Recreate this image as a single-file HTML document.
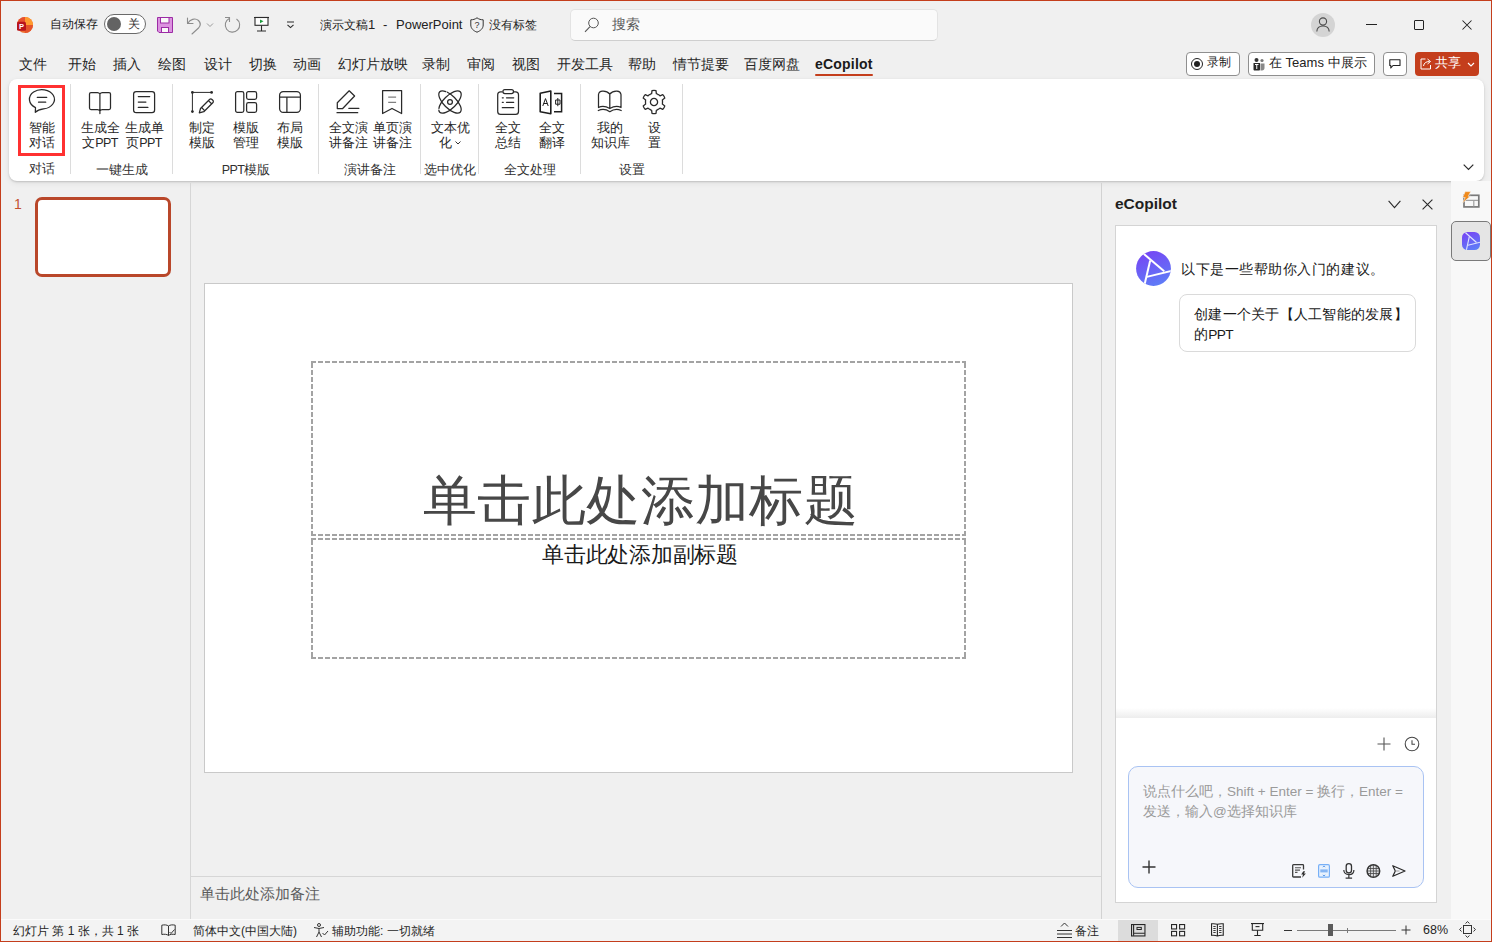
<!DOCTYPE html>
<html><head><meta charset="utf-8">
<style>
*{box-sizing:border-box;margin:0;padding:0}
html,body{width:1492px;height:942px;overflow:hidden;background:#f0f0f0}
body{position:relative;font-family:"Liberation Sans",sans-serif;color:#242424}
.a{position:absolute}
.t{position:absolute;white-space:nowrap;line-height:1}
svg{position:absolute;overflow:visible}
.ic{fill:none;stroke:#303030;stroke-width:1.1;stroke-linecap:round;stroke-linejoin:round}
.rl{position:absolute;font-size:12.5px;line-height:15px;text-align:center;width:60px;color:#262626}
.gl{position:absolute;font-size:12.5px;line-height:12px;text-align:center;width:100px;color:#303030}
.sep{position:absolute;top:84px;width:1px;height:90px;background:#dcdcdc}
</style></head><body>
<!-- window border -->
<div class="a" style="left:0;top:0;width:1492px;height:942px;border:1px solid #c43e1c;z-index:50;pointer-events:none"></div>

<!-- ===== TITLE BAR ===== -->
<div id="titlebar">
<svg style="left:16px;top:16px" width="18" height="18" viewBox="0 0 18 18">
 <circle cx="9" cy="9" r="8" fill="#ed6c2f"/>
 <path d="M9 1 A8 8 0 0 1 17 9 L9 9 Z" fill="#ff9a2e"/>
 <path d="M17 9 A8 8 0 0 1 9 17 L9 9 Z" fill="#e5532a"/>
 <path d="M1 9 A8 8 0 0 1 9 1 L9 9 Z" fill="#e6502f"/>
 <rect x="1" y="5.8" width="9" height="9" rx="1.6" fill="#b8141c"/>
 <text x="5.5" y="13.3" font-size="7.5" font-weight="bold" fill="#fff" text-anchor="middle" font-family="Liberation Sans">P</text>
</svg>
<div class="t" style="left:50px;top:18px;font-size:12.2px;color:#222">自动保存</div>
<div class="a" style="left:104px;top:14px;width:42px;height:20px;border:1px solid #6a6a6a;border-radius:10px;background:#fff"></div>
<div class="a" style="left:107px;top:17px;width:14px;height:14px;border-radius:7px;background:#636363"></div>
<div class="t" style="left:128px;top:18px;font-size:12px;color:#333">关</div>
<svg style="left:157px;top:17px" width="16" height="16" viewBox="0 0 16 16">
 <path d="M0.5 0.5 H15.5 V15.5 H2 L0.5 14 Z" fill="#dc92e0" stroke="#9c2ca5" stroke-width="1"/>
 <rect x="3.5" y="0.5" width="8.5" height="5.5" fill="#f9f9f9" stroke="#9c2ca5" stroke-width="1"/>
 <rect x="4.5" y="10.5" width="7" height="5" fill="#f9f9f9" stroke="#9c2ca5" stroke-width="1"/>
</svg>
<svg style="left:186px;top:16px" width="18" height="18" viewBox="0 0 18 18" class="ic" stroke="#8c8c8c">
 <path d="M1.5 2 V7.5 H7" style="stroke:#8c8c8c"/>
 <path d="M1.8 7.3 C4 3.5 9 1.5 12.5 4.5 C15 7 14.5 10 12.5 12 L6 18" style="stroke:#8c8c8c"/>
</svg>
<svg style="left:206px;top:22px" width="8" height="6" viewBox="0 0 8 6"><path d="M1 1.5 L4 4.5 L7 1.5" fill="none" stroke="#9a9a9a" stroke-width="1"/></svg>
<svg style="left:224px;top:16px" width="18" height="18" viewBox="0 0 18 18">
 <path d="M5.3 2.5 A7.2 7.2 0 1 0 12.5 3" fill="none" stroke="#8c8c8c" stroke-width="1.1"/>
 <path d="M1 1.5 H5.5 V6" fill="none" stroke="#8c8c8c" stroke-width="1.1"/>
</svg>
<svg style="left:254px;top:17px" width="16" height="16" viewBox="0 0 16 16">
 <path d="M0 0.5 H15" stroke="#2b2b2b" stroke-width="1.1"/>
 <rect x="1" y="0.5" width="13" height="7.8" fill="#fff" stroke="#2b2b2b" stroke-width="1.1"/>
 <path d="M6 2.5 L9.5 4.3 L6 6.2 Z" fill="#1f9d3f"/>
 <path d="M7.5 8.5 V14 M3 14 H12" stroke="#2b2b2b" stroke-width="1.1"/>
</svg>
<svg style="left:286px;top:21px" width="9" height="8" viewBox="0 0 9 8"><path d="M1 1 H8 M1.5 3.8 L4.5 6.6 L7.5 3.8" fill="none" stroke="#2b2b2b" stroke-width="1.1"/></svg>
<div class="t" style="left:320px;top:18px;font-size:12px;color:#222">演示文稿<span style="font-size:13px">1</span></div>
<div class="t" style="left:383px;top:18px;font-size:13px;color:#222">-</div>
<div class="t" style="left:396px;top:18px;font-size:13px;color:#222">PowerPoint</div>
<svg style="left:470px;top:17px" width="14" height="16" viewBox="0 0 14 16">
 <path d="M7 0.8 C5 2.3 3 2.8 0.8 2.8 V8 C0.8 11.5 3.5 13.8 7 15.2 C10.5 13.8 13.2 11.5 13.2 8 V2.8 C11 2.8 9 2.3 7 0.8 Z" fill="none" stroke="#333" stroke-width="1"/>
 <text x="7" y="11.3" font-size="9" fill="#333" text-anchor="middle" font-family="Liberation Sans">?</text>
</svg>
<div class="t" style="left:489px;top:19px;font-size:12px;color:#222">没有标签</div>
<div class="a" style="left:570px;top:9px;width:368px;height:32px;background:#fafafa;border:1px solid #e3e3e3;border-bottom-color:#cfcfcf;border-radius:5px"></div>
<svg style="left:584px;top:17px" width="16" height="16" viewBox="0 0 16 16">
 <circle cx="9.5" cy="6" r="4.8" fill="none" stroke="#555" stroke-width="1"/>
 <path d="M6 9.6 L1 14.8" stroke="#555" stroke-width="1.1"/>
</svg>
<div class="t" style="left:612px;top:18px;font-size:13.5px;color:#5c5c5c">搜索</div>
<div class="a" style="left:1311px;top:13px;width:24px;height:24px;border-radius:12px;background:#d4d4d4"></div>
<svg style="left:1315px;top:16px" width="16" height="17" viewBox="0 0 16 17">
 <circle cx="8" cy="5.5" r="3.6" fill="none" stroke="#4a4a4a" stroke-width="1.1"/>
 <path d="M1.8 15.5 C2 11.5 4.5 10 8 10 C11.5 10 14 11.5 14.2 15.5" fill="none" stroke="#4a4a4a" stroke-width="1.1"/>
</svg>
<div class="a" style="left:1366px;top:24px;width:11px;height:1px;background:#222"></div>
<div class="a" style="left:1414px;top:20px;width:10px;height:10px;border:1px solid #222;border-radius:1px"></div>
<svg style="left:1462px;top:20px" width="10" height="10" viewBox="0 0 10 10"><path d="M0.5 0.5 L9.5 9.5 M9.5 0.5 L0.5 9.5" stroke="#222" stroke-width="1.05"/></svg>
</div>

<!-- ===== TABS ===== -->
<div id="tabs">
<div class="t" style="left:19px;top:57.5px;font-size:13.5px;color:#262626">文件</div>
<div class="t" style="left:68px;top:57.5px;font-size:13.5px;color:#262626">开始</div>
<div class="t" style="left:113px;top:57.5px;font-size:13.5px;color:#262626">插入</div>
<div class="t" style="left:158px;top:57.5px;font-size:13.5px;color:#262626">绘图</div>
<div class="t" style="left:204px;top:57.5px;font-size:13.5px;color:#262626">设计</div>
<div class="t" style="left:249px;top:57.5px;font-size:13.5px;color:#262626">切换</div>
<div class="t" style="left:293px;top:57.5px;font-size:13.5px;color:#262626">动画</div>
<div class="t" style="left:338px;top:57.5px;font-size:13.5px;color:#262626">幻灯片放映</div>
<div class="t" style="left:422px;top:57.5px;font-size:13.5px;color:#262626">录制</div>
<div class="t" style="left:467px;top:57.5px;font-size:13.5px;color:#262626">审阅</div>
<div class="t" style="left:512px;top:57.5px;font-size:13.5px;color:#262626">视图</div>
<div class="t" style="left:557px;top:57.5px;font-size:13.5px;color:#262626">开发工具</div>
<div class="t" style="left:628px;top:57.5px;font-size:13.5px;color:#262626">帮助</div>
<div class="t" style="left:673px;top:57.5px;font-size:13.5px;color:#262626">情节提要</div>
<div class="t" style="left:744px;top:57.5px;font-size:13.5px;color:#262626">百度网盘</div>
<div class="t" style="left:815px;top:57px;font-size:14px;letter-spacing:0.2px;font-weight:bold;color:#1a1a1a">eCopilot</div>
<div class="a" style="left:815px;top:74px;width:58px;height:2px;background:#c43e1c;border-radius:1px"></div>
<div class="a" style="left:1186px;top:52px;width:54px;height:24px;border:1px solid #8f8f8f;border-radius:4px;background:#fff"></div>
<div class="a" style="left:1191px;top:58px;width:12px;height:12px;border:1.2px solid #222;border-radius:6px"></div>
<div class="a" style="left:1194px;top:61px;width:6px;height:6px;background:#222;border-radius:3px"></div>
<div class="t" style="left:1207px;top:56px;font-size:12px;color:#222">录制</div>
<div class="a" style="left:1248px;top:52px;width:127px;height:24px;border:1px solid #8f8f8f;border-radius:4px;background:#fff"></div>
<svg style="left:1253px;top:57px" width="12" height="14" viewBox="0 0 12 14">
 <circle cx="3.5" cy="3" r="2" fill="#333"/><circle cx="9" cy="3.5" r="1.6" fill="#777"/>
 <path d="M0.5 6 H7 V12.5 C7 13 6.5 13.5 6 13.5 H1.5 C1 13.5 0.5 13 0.5 12.5 Z" fill="#2a2a2a"/>
 <path d="M7.5 6.5 H11.5 V11 C11.5 12.5 10.5 13.5 9 13.5 H7.5 Z" fill="#888"/>
 <path d="M2 7.5 H5.5 M3.75 7.5 V12" stroke="#fff" stroke-width="1"/>
</svg>
<div class="t" style="left:1269px;top:56px;font-size:13px;color:#222">在 Teams 中展示</div>
<div class="a" style="left:1383px;top:52px;width:24px;height:24px;border:1px solid #8f8f8f;border-radius:4px;background:#fff"></div>
<svg style="left:1389px;top:59px" width="12" height="11" viewBox="0 0 12 11"><path d="M0.8 0.8 H11 V6.5 H4 L1.8 9 V6.5 H0.8 Z" fill="none" stroke="#222" stroke-width="1.1" stroke-linejoin="round"/></svg>
<div class="a" style="left:1415px;top:52px;width:64px;height:24px;border-radius:4px;background:#c43e1c"></div>
<svg style="left:1420px;top:58px" width="12" height="12" viewBox="0 0 12 12"><path d="M5.5 1 H1 V11 H10.5 V7" fill="none" stroke="#fff" stroke-width="1"/><path d="M3.5 8 C4 5 6 3.5 9.5 3.5 M7.5 1 L10.5 3.5 L7.5 6" fill="none" stroke="#fff" stroke-width="1"/></svg>
<div class="t" style="left:1435px;top:56px;font-size:13px;color:#fff">共享</div>
<svg style="left:1467px;top:62px" width="8" height="5" viewBox="0 0 8 5"><path d="M1 1 L4 4 L7 1" fill="none" stroke="#fff" stroke-width="1.1"/></svg>
</div>

<!-- ===== RIBBON ===== -->
<div class="a" style="left:9px;top:79px;width:1475px;height:102px;background:#fff;border-radius:8px;box-shadow:0 1px 2px rgba(0,0,0,.16),0 2px 6px rgba(0,0,0,.07)"></div>
<div id="ribbon">
<div class="a" style="left:18px;top:85px;width:47px;height:71px;border:3px solid #ff3131"></div>
<div class="sep" style="left:70px"></div>
<div class="sep" style="left:172px"></div>
<div class="sep" style="left:318px"></div>
<div class="sep" style="left:420px"></div>
<div class="sep" style="left:478px"></div>
<div class="sep" style="left:580px"></div>
<div class="sep" style="left:682px"></div>
<div class="rl" style="left:12px;top:121px">智能<br>对话</div>
<div class="rl" style="left:70px;top:121px">生成全<br>文<span style="letter-spacing:-0.6px">PPT</span></div>
<div class="rl" style="left:114px;top:121px">生成单<br>页<span style="letter-spacing:-0.6px">PPT</span></div>
<div class="rl" style="left:172px;top:121px">制定<br>模版</div>
<div class="rl" style="left:216px;top:121px">模版<br>管理</div>
<div class="rl" style="left:260px;top:121px">布局<br>模版</div>
<div class="rl" style="left:318px;top:121px">全文演<br>讲备注</div>
<div class="rl" style="left:362px;top:121px">单页演<br>讲备注</div>
<div class="rl" style="left:420px;top:121px">文本优<br>化<svg style="position:relative;display:inline-block;vertical-align:middle;margin-left:3px;top:-1px" width="6" height="4" viewBox="0 0 6 4"><path d="M0.5 0.5 L3 3 L5.5 0.5" fill="none" stroke="#333" stroke-width="1"/></svg></div>
<div class="rl" style="left:478px;top:121px">全文<br>总结</div>
<div class="rl" style="left:522px;top:121px">全文<br>翻译</div>
<div class="rl" style="left:580px;top:121px">我的<br>知识库</div>
<div class="rl" style="left:624px;top:121px">设<br>置</div>
<div class="gl" style="left:-8px;top:163px">对话</div>
<div class="gl" style="left:72px;top:164px">一键生成</div>
<div class="gl" style="left:196px;top:164px"><span style="letter-spacing:-0.6px">PPT</span>模版</div>
<div class="gl" style="left:320px;top:164px">演讲备注</div>
<div class="gl" style="left:400px;top:164px">选中优化</div>
<div class="gl" style="left:480px;top:164px">全文处理</div>
<div class="gl" style="left:582px;top:164px">设置</div>
<svg style="left:29px;top:89px" width="26" height="24" viewBox="0 0 26 24"><path d="M6.5 18.6 L6.3 23.4 Q9 20.6 14.5 19.9 A12.5 9.7 0 1 0 6.5 18.6 Z" fill="none" stroke="#2a2a2a" stroke-width="1.25" stroke-linecap="round" stroke-linejoin="round" stroke-width="1.4"/><path d="M8.3 8.4 H17.7 M9.5 13.2 H16.7" fill="none" stroke="#2a2a2a" stroke-width="1.25" stroke-linecap="round" stroke-linejoin="round" stroke-width="1.4"/></svg>
<svg style="left:89px;top:92px" width="23" height="23" viewBox="0 0 23 23"><path d="M10.9 2 C10.3 0.9 9.5 0.5 8.5 0.5 H2 C1 0.5 0.5 1 0.5 2 V16 C0.5 17 1 17.5 2 17.5 H8.5 C9.5 17.5 10.4 18 10.9 19 C11.4 18 12.3 17.5 13.3 17.5 H20 C21 17.5 21.5 17 21.5 16 V2 C21.5 1 21 0.5 20 0.5 H13.3 C12.3 0.5 11.5 0.9 10.9 2 Z M10.9 2 V21.5" fill="none" stroke="#2a2a2a" stroke-width="1.25" stroke-linecap="round" stroke-linejoin="round"/></svg>
<svg style="left:133px;top:91px" width="22" height="22" viewBox="0 0 22 22"><rect x="0.6" y="0.6" width="21" height="21" rx="2.6" fill="none" stroke="#2a2a2a" stroke-width="1.25" stroke-linecap="round" stroke-linejoin="round"/><path d="M5.3 5.5 H16.7 M5.3 11 H12.9 M5.3 16.4 H14.9" fill="none" stroke="#2a2a2a" stroke-width="1.25" stroke-linecap="round" stroke-linejoin="round"/></svg>
<svg style="left:191px;top:91px" width="24" height="23" viewBox="0 0 24 23"><path d="M1.4 1.4 H20.6 M1.4 1.4 V20.6" fill="none" stroke="#2a2a2a" stroke-width="1"/><circle cx="1.4" cy="1.4" r="1.4" fill="#2a2a2a"/><circle cx="20.6" cy="1.4" r="1.4" fill="#2a2a2a"/><circle cx="1.4" cy="20.6" r="1.4" fill="#2a2a2a"/><path d="M9.5 17.5 L18.5 8.5 C19.2 7.8 20.3 7.8 21 8.5 L21.8 9.3 C22.5 10 22.5 11 21.8 11.7 L12.8 20.7 L8.3 21.9 Z M10.6 16.5 L13.6 19.6 M17.4 9.6 L20.6 12.8" fill="none" stroke="#2a2a2a" stroke-width="1.25" stroke-linecap="round" stroke-linejoin="round" stroke-width="1"/></svg>
<svg style="left:235px;top:91px" width="23" height="22" viewBox="0 0 23 22"><rect x="0.6" y="0.6" width="8.2" height="20.8" rx="1.8" fill="none" stroke="#2a2a2a" stroke-width="1.25" stroke-linecap="round" stroke-linejoin="round"/><rect x="11.6" y="0.6" width="10" height="7.7" rx="1.8" fill="none" stroke="#2a2a2a" stroke-width="1.25" stroke-linecap="round" stroke-linejoin="round"/><rect x="11.6" y="11.6" width="10" height="9.8" rx="1.8" fill="none" stroke="#2a2a2a" stroke-width="1.25" stroke-linecap="round" stroke-linejoin="round"/></svg>
<svg style="left:279px;top:91px" width="22" height="22" viewBox="0 0 22 22"><rect x="0.6" y="0.6" width="20.8" height="20.8" rx="3.6" fill="none" stroke="#2a2a2a" stroke-width="1.25" stroke-linecap="round" stroke-linejoin="round"/><path d="M0.6 6.2 H21.4 M7.9 6.2 V21.4" fill="none" stroke="#2a2a2a" stroke-width="1.25" stroke-linecap="round" stroke-linejoin="round"/></svg>
<svg style="left:336px;top:90px" width="24" height="24" viewBox="0 0 24 24"><path d="M1.3 18.5 V12.7 L13.2 0.8 L18.6 6 L6.7 18.5 Z" fill="none" stroke="#2a2a2a" stroke-width="1.25" stroke-linecap="round" stroke-linejoin="round"/><path d="M12.8 18.3 H22.9" fill="none" stroke="#2a2a2a" stroke-width="1.25" stroke-linecap="round" stroke-linejoin="round"/><path d="M1 22.7 H21.7" fill="none" stroke="#2a2a2a" stroke-width="1.25" stroke-linecap="round" stroke-linejoin="round" stroke-width="1.5"/></svg>
<svg style="left:382px;top:90px" width="21" height="25" viewBox="0 0 21 25"><path d="M0.6 0.6 H19.6 V23.5 L10 18.5 L0.6 23.5 Z" fill="none" stroke="#2a2a2a" stroke-width="1.25" stroke-linecap="round" stroke-linejoin="round"/><path d="M6.2 7.1 H14.1 M6.2 12.4 H14.1" fill="none" stroke="#808080" stroke-width="1.3"/></svg>
<svg style="left:437px;top:89px" width="26" height="26" viewBox="0 0 26 26"><g transform="translate(13 13)"><ellipse rx="14.5" ry="6.3" transform="rotate(45)" fill="none" stroke="#2a2a2a" stroke-width="1.25" stroke-linecap="round" stroke-linejoin="round" stroke-dasharray="40 1.8 50 1.8"/><ellipse rx="14.5" ry="6.3" transform="rotate(-45)" fill="none" stroke="#2a2a2a" stroke-width="1.25" stroke-linecap="round" stroke-linejoin="round" stroke-dasharray="36 1.8 52 1.8"/><circle r="2.4" fill="none" stroke="#2a2a2a" stroke-width="1.25" stroke-linecap="round" stroke-linejoin="round"/></g></svg>
<svg style="left:497px;top:89px" width="23" height="27" viewBox="0 0 23 27"><path d="M5 2.9 H3.6 C1.9 2.9 0.7 4.1 0.7 5.8 V22.5 C0.7 24.2 1.9 25.4 3.6 25.4 H18.6 C20.3 25.4 21.5 24.2 21.5 22.5 V5.8 C21.5 4.1 20.3 2.9 18.6 2.9 H17.2" fill="none" stroke="#2a2a2a" stroke-width="1.25" stroke-linecap="round" stroke-linejoin="round"/><rect x="5.9" y="0.6" width="10.6" height="4" rx="2" fill="none" stroke="#2a2a2a" stroke-width="1.25" stroke-linecap="round" stroke-linejoin="round"/><path d="M5.3 8.8 H6.3 M9.5 8.8 H16.7 M5.3 13.3 H6.3 M9.5 13.3 H16.7 M5.3 18.7 H16.7" fill="none" stroke="#2a2a2a" stroke-width="1.25" stroke-linecap="round" stroke-linejoin="round"/></svg>
<svg style="left:539px;top:90px" width="25" height="25" viewBox="0 0 25 25"><path d="M1.2 3.2 L11.8 1 V23.8 L1.2 21.8 Z" fill="none" stroke="#1e1e1e" stroke-width="1.6" stroke-linejoin="round"/><path d="M15 3.4 H22.6 V21.8 H15" fill="none" stroke="#1e1e1e" stroke-width="1.5"/><path d="M3.8 16 L6.5 8.6 L9.2 16 M4.7 13.5 H8.3" fill="none" stroke="#1e1e1e" stroke-width="1"/><path d="M16.6 10 H21 V14.2 H16.6 Z M18.8 8 V16.2" fill="none" stroke="#1e1e1e" stroke-width="1"/></svg>
<svg style="left:597px;top:90px" width="25" height="24" viewBox="0 0 25 24"><path d="M12.8 4 C11 2 8.5 1 5.5 1.2 C3.5 1.3 1.8 2.8 1.5 4.5 V17.5 C4.5 16 9 16.3 12.8 18.5 C16.6 16.3 21 16 24 17.5 V4.5 C23.7 2.8 22 1.3 20 1.2 C17 1 14.6 2 12.8 4 Z M12.8 4 V18.5" fill="none" stroke="#2a2a2a" stroke-width="1.25" stroke-linecap="round" stroke-linejoin="round" stroke-width="1.2"/><path d="M1.3 20.5 C4.8 18.8 9.3 19.2 12.8 21.7 C16.3 19.2 20.8 18.8 24.2 20.5" fill="none" stroke="#2a2a2a" stroke-width="1.25" stroke-linecap="round" stroke-linejoin="round" stroke-width="1.2"/></svg>
<svg style="left:641px;top:89px" width="26" height="26" viewBox="-13 -13 26 26"><path d="M-4.21 -7.30 Q-3.43 -8.07 -2.37 -8.27 L-2.00 -11.33 Q0.00 -11.85 2.00 -11.33 L2.37 -8.27 Q3.43 -8.07 4.21 -7.30 Q5.28 -7.01 5.97 -6.19 L8.81 -7.39 Q10.26 -5.92 10.81 -3.93 L8.34 -2.08 Q8.71 -1.07 8.43 0.00 Q8.71 1.07 8.34 2.08 L10.81 3.93 Q10.26 5.92 8.81 7.39 L5.97 6.19 Q5.28 7.01 4.21 7.30 Q3.43 8.07 2.37 8.27 L2.00 11.33 Q0.00 11.85 -2.00 11.33 L-2.37 8.27 Q-3.43 8.07 -4.21 7.30 Q-5.28 7.01 -5.97 6.19 L-8.81 7.39 Q-10.26 5.92 -10.81 3.93 L-8.34 2.08 Q-8.71 1.07 -8.43 0.00 Q-8.71 -1.07 -8.34 -2.08 L-10.81 -3.93 Q-10.26 -5.92 -8.81 -7.39 L-5.97 -6.19 Q-5.28 -7.01 -4.21 -7.30 Z" fill="none" stroke="#2a2a2a" stroke-width="1.3" stroke-linejoin="round"/><circle r="3.6" fill="none" stroke="#2a2a2a" stroke-width="1.3"/></svg>
<svg style="left:1463px;top:164px" width="11" height="7" viewBox="0 0 11 7"><path d="M0.7 0.7 L5.5 5.5 L10.3 0.7" fill="none" stroke="#2a2a2a" stroke-width="1.2"/></svg>
</div>

<!-- ===== LEFT PANE / CANVAS ===== -->
<div id="main">
<div class="a" style="left:190px;top:183px;width:1px;height:736px;background:#d6d6d6"></div>
<div class="t" style="left:14px;top:196.5px;font-size:14px;color:#c4502e">1</div>
<div class="a" style="left:35px;top:197px;width:136px;height:80px;border:3px solid #b9472a;border-radius:7px;background:#fff"></div>
<div class="a" style="left:204px;top:283px;width:869px;height:490px;background:#fff;border:1px solid #c9c9c9"></div>
<div class="a" style="left:311px;top:361px;width:655px;height:175px;background-image:linear-gradient(90deg,#a3a3a3 5px,transparent 5px),linear-gradient(90deg,#a3a3a3 5px,transparent 5px),linear-gradient(0deg,#a3a3a3 5px,transparent 5px),linear-gradient(0deg,#a3a3a3 5px,transparent 5px);background-size:7px 2px,7px 2px,2px 7px,2px 7px;background-position:0 0,0 100%,0 0,100% 0;background-repeat:repeat-x,repeat-x,repeat-y,repeat-y"></div>
<div class="a" style="left:311px;top:538px;width:655px;height:121px;background-image:linear-gradient(90deg,#a3a3a3 5px,transparent 5px),linear-gradient(90deg,#a3a3a3 5px,transparent 5px),linear-gradient(0deg,#a3a3a3 5px,transparent 5px),linear-gradient(0deg,#a3a3a3 5px,transparent 5px);background-size:7px 2px,7px 2px,2px 7px,2px 7px;background-position:0 0,0 100%,0 0,100% 0;background-repeat:repeat-x,repeat-x,repeat-y,repeat-y"></div>
<div class="t" style="left:423px;top:473px;font-size:54px;letter-spacing:0.4px;color:#474747;font-weight:300">单击此处添加标题</div>
<div class="t" style="left:542px;top:545px;font-size:21.5px;letter-spacing:-0.25px;color:#1a1a1a">单击此处添加副标题</div>
<div class="a" style="left:191px;top:876px;width:911px;height:1px;background:#d6d6d6"></div>
<div class="t" style="left:200px;top:886px;font-size:15px;color:#5a5a5a">单击此处添加备注</div>
</div>

<!-- ===== RIGHT PANE ===== -->
<div id="right">
<div class="a" style="left:1101px;top:183px;width:1px;height:736px;background:#d2d2d2"></div>
<div class="a" style="left:1451px;top:181px;width:40px;height:738px;background:#f8f8f8"></div>
<div class="t" style="left:1115px;top:196px;font-size:15.5px;font-weight:bold;color:#1f1f1f">eCopilot</div>
<svg style="left:1388px;top:200px" width="13" height="9" viewBox="0 0 13 9"><path d="M0.6 0.8 L6.5 7.6 L12.4 0.8" fill="none" stroke="#2a2a2a" stroke-width="1.1"/></svg>
<svg style="left:1422px;top:199px" width="11" height="11" viewBox="0 0 11 11"><path d="M0.6 0.6 L10.4 10.4 M10.4 0.6 L0.6 10.4" fill="none" stroke="#2a2a2a" stroke-width="1.1"/></svg>
<div class="a" style="left:1115px;top:225px;width:322px;height:678px;background:#fff;border:1px solid #d4d4d4"></div>
<div class="a" style="left:1116px;top:708px;width:320px;height:10px;background:linear-gradient(#fff,#ededed)"></div>
<svg style="left:1136px;top:251px" width="35" height="35" viewBox="0 0 35 35">
 <defs><linearGradient id="g1" x1="0.2" y1="0" x2="0.6" y2="1"><stop offset="0" stop-color="#7744f4"/><stop offset="1" stop-color="#5f7cf7"/></linearGradient><clipPath id="c1"><circle cx="17.5" cy="17.5" r="17.4"/></clipPath></defs>
 <circle cx="17.5" cy="17.5" r="17.4" fill="url(#g1)"/>
 <g clip-path="url(#c1)" stroke="#fff" stroke-width="2" fill="none"><path d="M6.5 1.8 L28.2 20.3"/><path d="M36 19.7 L10.8 25.9"/><path d="M14.2 9.5 L8.2 35"/></g>
</svg>
<div class="t" style="left:1181px;top:262px;font-size:14px;letter-spacing:0.55px;color:#1a1a1a">以下是一些帮助你入门的建议。</div>
<div class="a" style="left:1179px;top:294px;width:237px;height:58px;border:1px solid #dadada;border-radius:8px;background:#fff"></div>
<div class="a" style="left:1194px;top:305px;font-size:13.7px;letter-spacing:0.25px;line-height:20px;color:#1a1a1a;white-space:nowrap">创建一个关于【人工智能的发展】<br>的<span style="letter-spacing:-0.6px">PPT</span></div>
<svg style="left:1377px;top:737px" width="14" height="14" viewBox="0 0 14 14"><path d="M7 0.5 V13.5 M0.5 7 H13.5" fill="none" stroke="#555" stroke-width="1.1"/></svg>
<svg style="left:1404px;top:736px" width="16" height="16" viewBox="0 0 16 16"><circle cx="8" cy="8" r="6.8" fill="none" stroke="#444" stroke-width="1.05"/><path d="M8 4.3 V8.3 H11" fill="none" stroke="#444" stroke-width="1.05"/></svg>
<div class="a" style="left:1128px;top:766px;width:296px;height:122px;border:1px solid #a9c3f3;border-radius:10px;background:#f6f7fb"></div>
<div class="a" style="left:1143px;top:782px;font-size:13.5px;line-height:20px;color:#9a9a9a;white-space:nowrap">说点什么吧，Shift + Enter = 换行，Enter =<br>发送，输入@选择知识库</div>
<svg style="left:1142px;top:860px" width="14" height="14" viewBox="0 0 14 14"><path d="M7 0.5 V13.5 M0.5 7 H13.5" fill="none" stroke="#333" stroke-width="1.4"/></svg>
<svg style="left:1292px;top:864px" width="15" height="14" viewBox="0 0 15 14"><path d="M9 13 H1.5 C1 13 0.7 12.7 0.7 12.2 V1.5 C0.7 1 1 0.7 1.5 0.7 H10.7 C11.2 0.7 11.5 1 11.5 1.5 V5.5" fill="none" stroke="#3a3a3a" stroke-width="1.3"/><path d="M3 3.8 H9 M3 6.1 H8 M3 8.4 H5.5" stroke="#555" stroke-width="1.1"/><path d="M11.3 7.3 L9.2 10.6 H11 L10.2 13.8 L13.9 9.6 H12 L13.1 7.3 Z" fill="#333"/></svg>
<svg style="left:1318px;top:864px" width="12" height="14" viewBox="0 0 12 14"><rect x="0.6" y="0.6" width="10.8" height="12.6" rx="1.3" fill="#e9f2fd" stroke="#77b0f7" stroke-width="1.2"/><rect x="2.3" y="5.4" width="7.4" height="3" fill="#86b6f3"/><path d="M4.8 3 L6 2 L7.2 3 M4.8 10.9 L6 11.9 L7.2 10.9" fill="none" stroke="#4d92ea" stroke-width="0.9"/></svg>
<svg style="left:1343px;top:863px" width="12" height="16" viewBox="0 0 12 16"><rect x="3.2" y="0.7" width="5.3" height="9.3" rx="2.65" fill="none" stroke="#333" stroke-width="1.3"/><path d="M0.8 7 C0.8 9.8 2.9 11.7 5.85 11.7 C8.8 11.7 10.9 9.8 10.9 7 M5.85 11.7 V15 M2.6 15.2 H9.1" fill="none" stroke="#333" stroke-width="1.2"/></svg>
<svg style="left:1366px;top:864px" width="15" height="14" viewBox="0 0 15 14"><circle cx="7.4" cy="7" r="6.3" fill="#888" fill-opacity="0.18" stroke="#333" stroke-width="1.5"/><path d="M4.6 1.5 V12.5 M7.4 0.8 V13.2 M10.2 1.5 V12.5 M1.5 4.5 H13.3 M1 7 H13.8 M1.5 9.5 H13.3" fill="none" stroke="#444" stroke-width="0.8"/></svg>
<svg style="left:1392px;top:865px" width="14" height="12" viewBox="0 0 14 12"><path d="M0.8 0.7 L13 6 L0.8 11.3 L3.3 6 Z" fill="none" stroke="#2a2a2a" stroke-width="1.25" stroke-linejoin="round"/><path d="M3.5 6 H7.5" stroke="#999" stroke-width="1"/></svg>
<svg style="left:1461px;top:191px" width="19" height="18" viewBox="0 0 19 18"><rect x="3" y="4.3" width="14.8" height="11.6" fill="none" stroke="#7a7a7a" stroke-width="1.7"/><path d="M3.5 9.4 H17 M12.8 9.4 V15.5" stroke="#a0a0a0" stroke-width="1.2"/><path d="M4.2 0.6 H9.8 L7.3 5.2 H9.4 L1.2 12.2 L4.2 6.6 H1.6 Z" fill="#f08a1c" stroke="#f7f7f7" stroke-width="0.6"/></svg>
<div class="a" style="left:1451px;top:221px;width:40px;height:40px;border:1px solid #7a7a7a;border-radius:5px;background:#e5e5e5"></div>
<svg style="left:1462px;top:232px" width="18" height="18" viewBox="0 0 18 18">
 <defs><linearGradient id="g2" x1="0.2" y1="0" x2="0.6" y2="1"><stop offset="0" stop-color="#7744f4"/><stop offset="1" stop-color="#5f7cf7"/></linearGradient><clipPath id="c2"><rect width="18" height="18" rx="5.5"/></clipPath></defs>
 <rect width="18" height="18" rx="5.5" fill="url(#g2)"/>
 <g clip-path="url(#c2)" stroke="#dfe4ff" stroke-width="1.1" fill="none"><path d="M3.3 0.5 L14.5 10.5"/><path d="M19 10 L6 13.3"/><path d="M7.3 4.7 L4.3 18.5"/></g>
</svg>
</div>

<!-- ===== STATUS BAR ===== -->
<div id="status">
<div class="a" style="left:1px;top:919px;width:1490px;height:1px;background:#fbfbfb"></div>
<div class="a" style="left:1px;top:920px;width:1490px;height:21px;background:#f3f3f3"></div>
<div class="t" style="left:13px;top:925px;font-size:12px;color:#262626">幻灯片 第 1 张，共 1 张</div>
<svg style="left:161px;top:924px" width="15" height="13" viewBox="0 0 15 13"><path d="M7.5 2 C6 0.8 3.5 0.6 0.8 1.2 V10.5 C3.5 10 6 10.2 7.5 11.5 C9 10.2 11.5 10 14.2 10.5 V1.2 C11.5 0.6 9 0.8 7.5 2 Z M7.5 2 V11.5" fill="none" stroke="#333" stroke-width="1"/><path d="M8.5 8 L10 9.5 L13.5 5.5" fill="none" stroke="#333" stroke-width="1"/></svg>
<div class="t" style="left:193px;top:925px;font-size:12px;color:#262626">简体中文(中国大陆)</div>
<svg style="left:313px;top:923px" width="16" height="15" viewBox="0 0 16 15"><circle cx="6" cy="2" r="1.5" fill="none" stroke="#333" stroke-width="1"/><path d="M1 4.5 L6 5.5 L11 4.5 M6 5.5 V9 L3.5 14 M6 9 L8.5 14" fill="none" stroke="#333" stroke-width="1"/><path d="M9.5 10 L11.5 12 L15 8" fill="none" stroke="#333" stroke-width="1"/></svg>
<div class="t" style="left:332px;top:925px;font-size:12px;color:#262626">辅助功能: 一切就绪</div>
<svg style="left:1056px;top:922px" width="17" height="17" viewBox="0 0 17 17"><path d="M5 4.5 L8.5 1 L12 4.5" fill="none" stroke="#333" stroke-width="1"/><path d="M1 8.5 H16 M1 12 H16 M1 15.5 H16" stroke="#333" stroke-width="1"/></svg>
<div class="t" style="left:1075px;top:925px;font-size:12px;color:#262626">备注</div>
<div class="a" style="left:1118px;top:920px;width:40px;height:21px;background:#dcdcdc"></div>
<svg style="left:1131px;top:924px" width="15" height="13" viewBox="0 0 15 13"><rect x="0.55" y="0.55" width="13.4" height="11.4" fill="none" stroke="#262626" stroke-width="1.1"/><path d="M2.6 0.8 V11.8 M2.6 9.2 H13.8" fill="none" stroke="#262626" stroke-width="1.1"/><rect x="6" y="3.4" width="4.3" height="2.1" fill="none" stroke="#262626" stroke-width="1"/></svg>
<svg style="left:1171px;top:924px" width="15" height="13" viewBox="0 0 15 13"><rect x="0.55" y="0.55" width="5" height="4.4" fill="none" stroke="#262626" stroke-width="1.1"/><rect x="8.6" y="0.55" width="5" height="4.4" fill="none" stroke="#262626" stroke-width="1.1"/><rect x="0.55" y="7.4" width="5" height="4.4" fill="none" stroke="#262626" stroke-width="1.1"/><rect x="8.6" y="7.4" width="5" height="4.4" fill="none" stroke="#262626" stroke-width="1.1"/></svg>
<svg style="left:1211px;top:923px" width="14" height="14" viewBox="0 0 14 14"><path d="M6.4 1.3 C4.5 0.6 2.5 0.6 0.55 0.8 V12.3 C2.5 12.1 4.5 12.2 6.4 12.9 C8.3 12.2 10.3 12.1 12.25 12.3 V0.8 C10.3 0.6 8.3 0.6 6.4 1.3 Z M6.4 1.3 V12.9" fill="none" stroke="#262626" stroke-width="1.1"/><path d="M2.3 3.5 H4.7 M2.3 5.5 H4.7 M2.3 7.5 H4.7 M2.3 9.5 H4.7 M8.1 3.5 H10.5 M8.1 5.5 H10.5 M8.1 7.5 H10.5 M8.1 9.5 H10.5" stroke="#262626" stroke-width="0.9"/></svg>
<svg style="left:1251px;top:923px" width="14" height="14" viewBox="0 0 14 14"><path d="M0 0.55 H13" stroke="#262626" stroke-width="1.1"/><path d="M1.3 0.8 V7.3 H11.7 V0.8" fill="none" stroke="#262626" stroke-width="1.1"/><path d="M4.5 3.6 H8.5" stroke="#262626" stroke-width="1.1"/><path d="M6.5 7.3 V12.4 M3.3 12.5 H9.7" stroke="#262626" stroke-width="1.1"/></svg>
<div class="a" style="left:1284px;top:930px;width:8px;height:1px;background:#333"></div>
<div class="a" style="left:1297px;top:930px;width:99px;height:1px;background:#7a7a7a"></div>
<div class="a" style="left:1328px;top:924px;width:5px;height:12px;background:#5a5a5a"></div>
<div class="a" style="left:1347px;top:928px;width:1px;height:5px;background:#7a7a7a"></div>
<svg style="left:1401px;top:925px" width="10" height="10" viewBox="0 0 10 10"><path d="M5 0.5 V9.5 M0.5 5 H9.5" stroke="#333" stroke-width="1"/></svg>
<div class="t" style="left:1423px;top:924px;font-size:12.5px;color:#262626">68%</div>
<svg style="left:1459px;top:921px" width="17" height="17" viewBox="0 0 17 17"><rect x="4.5" y="4.5" width="8" height="8" fill="none" stroke="#333" stroke-width="1"/><path d="M6.5 2.5 L8.5 0.6 L10.5 2.5 M6.5 14.5 L8.5 16.4 L10.5 14.5 M2.5 6.5 L0.6 8.5 L2.5 10.5 M14.5 6.5 L16.4 8.5 L14.5 10.5" fill="none" stroke="#333" stroke-width="1"/></svg>
</div>
</body></html>
